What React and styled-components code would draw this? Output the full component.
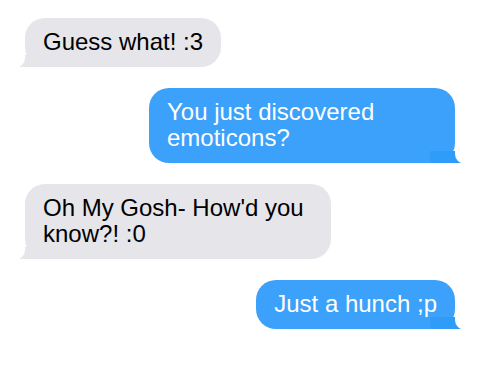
import React from "react";
import styled, { createGlobalStyle } from "styled-components";

const GlobalStyle = createGlobalStyle`
    html, body {
        margin: 0;
        padding: 0;
        background: #ffffff;
    }
    body {
        font-family: "Liberation Sans", Arial, sans-serif;
    }
`;

const Thread = styled.div`
    display: flex;
    flex-direction: column;
    gap: 21px;
    padding: 18px 25px;
`;

const Bubble = styled.p`
    position: relative;
    z-index: 0;
    margin: 0;
    max-width: 306px;
    box-sizing: border-box;
    padding: 11px 18px 12px;
    border-radius: 20px;
    font-size: 24px;
    line-height: 26px;
    align-self: ${props => props.fromMe ? "flex-end" : "flex-start"};
    background: ${props => props.fromMe ? "#3ba1fa" : "#e5e5ea"};
    color: ${props => props.fromMe ? "#ffffff" : "#000000"};

    &::before {
        content: "";
        position: absolute;
        z-index: -1;
        bottom: 0;
        ${props => props.fromMe ? "right: -9px;" : "left: -8px;"}
        width: 34px;
        height: 12px;
        background: ${props => props.fromMe ? "#2f9cfa" : "#e5e5ea"};
        ${props => props.fromMe ? "border-bottom-left-radius: 4px;" : "border-bottom-right-radius: 4px;"}
    }

    &::after {
        content: "";
        position: absolute;
        z-index: -1;
        bottom: -1px;
        ${props => props.fromMe ? "right: -31px;" : "left: -31px;"}
        width: 31px;
        height: 22px;
        background: #ffffff;
        ${props => props.fromMe ? "border-bottom-left-radius: 10px;" : "border-bottom-right-radius: 10px;"}
    }
`;

const messages = [
    { text: "Guess what! :3", fromMe: false },
    { text: "You just discovered emoticons?", fromMe: true },
    { text: "Oh My Gosh- How'd you know?! :0", fromMe: false },
    { text: "Just a hunch ;p", fromMe: true },
];

export default function App() {
    return (
        <>
            <GlobalStyle />
            <Thread>
                {messages.map((m, i) => (
                    <Bubble key={i} fromMe={m.fromMe}>{m.text}</Bubble>
                ))}
            </Thread>
        </>
    );
}
